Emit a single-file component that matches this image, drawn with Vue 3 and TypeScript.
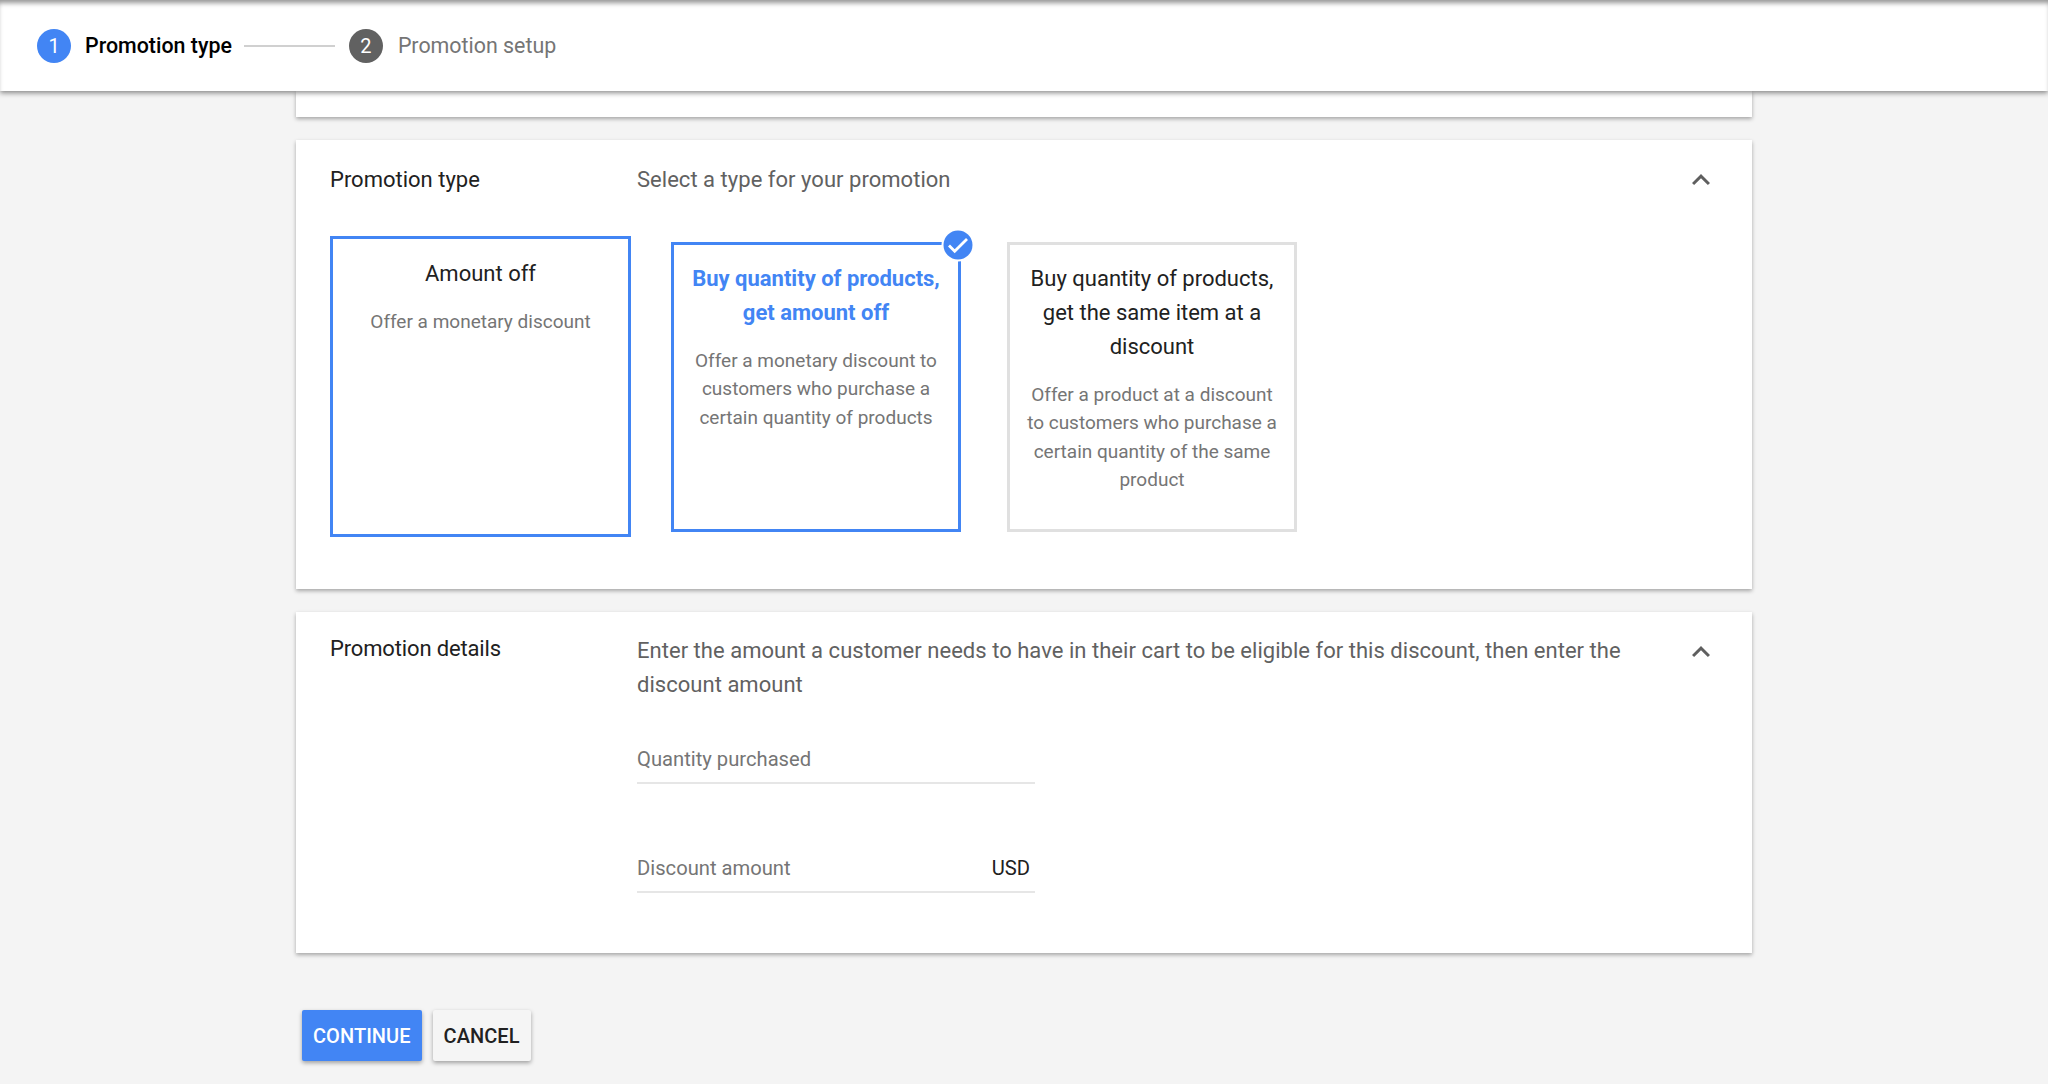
<script setup lang="ts">
interface Tile {
  title: string;
  desc: string;
  kind: string;
}
const tiles: Tile[] = [
  { title: 'Amount off', desc: 'Offer a monetary discount', kind: 'hover' },
  { title: 'Buy quantity of products, get amount off', desc: 'Offer a monetary discount to customers who purchase a certain quantity of products', kind: 'selected' },
  { title: 'Buy quantity of products, get the same item at a discount', desc: 'Offer a product at a discount to customers who purchase a certain quantity of the same product', kind: 'plain' },
];
</script>

<template>
  <div class="page">
    <header class="stepper">
      <span class="dot blue">1</span>
      <span class="step active">Promotion type</span>
      <span class="rule"></span>
      <span class="dot grey">2</span>
      <span class="step">Promotion setup</span>
    </header>
    <main class="column">
      <div class="card stub"></div>
      <section class="card type">
        <div class="row">
          <h2 class="label">Promotion type</h2>
          <p class="intro">Select a type for your promotion</p>
          <svg class="chev" width="36" height="36" viewBox="0 0 24 24"><path d="M7.41 15.41 12 10.83l4.59 4.58L18 14l-6-6-6 6z" fill="#5f5f5f" /></svg>
        </div>
        <div class="tiles">
          <div v-for="t in tiles" :key="t.kind" class="tile" :class="t.kind">
            <div class="tile-title">{{ t.title }}</div>
            <div class="tile-desc">{{ t.desc }}</div>
            <svg v-if="t.kind === 'selected'" class="badge" width="34" height="34" viewBox="0 0 34 34">
              <circle cx="17" cy="17" r="16.5" fill="#fff" />
              <circle cx="17" cy="17" r="14.5" fill="#4285f4" />
              <path d="M8 17.5l5.7 5.7L26 11" fill="none" stroke="#fff" stroke-width="2.8" />
            </svg>
          </div>
        </div>
      </section>
      <section class="card details">
        <div class="row">
          <h2 class="label up">Promotion details</h2>
          <div class="body">
            <p class="intro wrap">Enter the amount a customer needs to have in their cart to be eligible for this discount, then enter the discount amount</p>
            <div class="field first"><span>Quantity purchased</span></div>
            <div class="field"><span>Discount amount</span><b>USD</b></div>
          </div>
          <svg class="chev" width="36" height="36" viewBox="0 0 24 24"><path d="M7.41 15.41 12 10.83l4.59 4.58L18 14l-6-6-6 6z" fill="#5f5f5f" /></svg>
        </div>
      </section>
      <div class="actions">
        <button class="btn primary" type="button">CONTINUE</button>
        <button class="btn" type="button">CANCEL</button>
      </div>
    </main>
  </div>
</template>

<style>
html, body { margin: 0; background: #f4f4f4; }
</style>

<style scoped>
.page { height: 1084px; overflow: hidden; background: #f4f4f4; font-family: Roboto, "Liberation Sans", sans-serif; }
.stepper { position: relative; z-index: 2; height: 91px; box-sizing: border-box; padding: 0 0 0 37px; display: flex; align-items: center; background: #fff; box-shadow: 0 2px 5px rgba(0,0,0,.45), inset 0 5px 5px -2px rgba(0,0,0,.42); }
.dot { width: 34px; height: 34px; border-radius: 50%; color: #fff; font-size: 20px; display: flex; align-items: center; justify-content: center; }
.blue { background: #4285f4; }
.grey { background: #616161; }
.step { margin-left: 15px; font-size: 21.4px; color: #757575; }
.step.active { margin-left: 14px; color: #000; font-weight: 500; }
.rule { width: 91px; height: 2px; margin: 0 14px 0 12px; background: #d0d0d0; }
.column { width: 1456px; margin: 0 auto; }
.card { background: #fff; box-shadow: 0 2px 4px rgba(0,0,0,.32); margin-bottom: 23px; }
.stub { height: 26px; }
.type { height: 449px; box-sizing: border-box; padding: 26px 34px 0; }
.details { height: 341px; box-sizing: border-box; padding: 26px 34px 0; }
.row { display: flex; align-items: flex-start; }
.label { width: 307px; flex: none; margin: 0; font-size: 22px; font-weight: 400; line-height: 28px; color: #212121; }
.label.up { margin-top: -3px; letter-spacing: -.15px; }
.intro { flex: 1; margin: 0; font-size: 22px; line-height: 28px; letter-spacing: .03px; color: #616161; }
.intro.wrap { line-height: 34px; margin-top: -4px; flex: none; }
.body { flex: 1; }
.chev { flex: none; margin: -4px -1px 0 0; }
.tiles { display: flex; align-items: center; margin-top: 38px; height: 301px; }
.tile { position: relative; box-sizing: border-box; width: 290px; height: 290px; padding: 17px 14px; border: 3px solid #e0e0e0; text-align: center; }
.tile + .tile { margin-left: 46px; }
.tile.hover { width: 301px; height: 301px; border-color: #4285f4; padding-top: 18px; }
.tile.selected { margin-left: 40px; border-color: #4285f4; }
.tile-title { font-size: 22px; line-height: 34px; color: #212121; }
.tile-desc { margin-top: 17px; font-size: 19px; line-height: 28.5px; color: #757575; }
.selected .tile-title { color: #4285f4; font-weight: 700; }
.badge { position: absolute; top: -17px; right: -17px; }
.field { display: flex; justify-content: space-between; align-items: center; width: 398px; height: 46px; padding: 0 5px 2px 0; box-sizing: border-box; border-bottom: 2px solid #e6e6e6; margin-top: 63px; font-size: 20.2px; color: #757575; }
.field.first { margin-top: 36px; }
.field b { font-weight: 400; color: #212121; }
.actions { display: flex; gap: 11px; padding: 35px 0 0 6px; margin-top: -1px; }
.btn { height: 51px; padding: 0 11px; border: 0; border-radius: 2px; background: #f5f5f5; box-shadow: 0 2px 4px rgba(0,0,0,.35); font: 500 20px Roboto, sans-serif; letter-spacing: .05px; color: #212121; }
.btn.primary { background: #4285f4; color: #fff; }
</style>
